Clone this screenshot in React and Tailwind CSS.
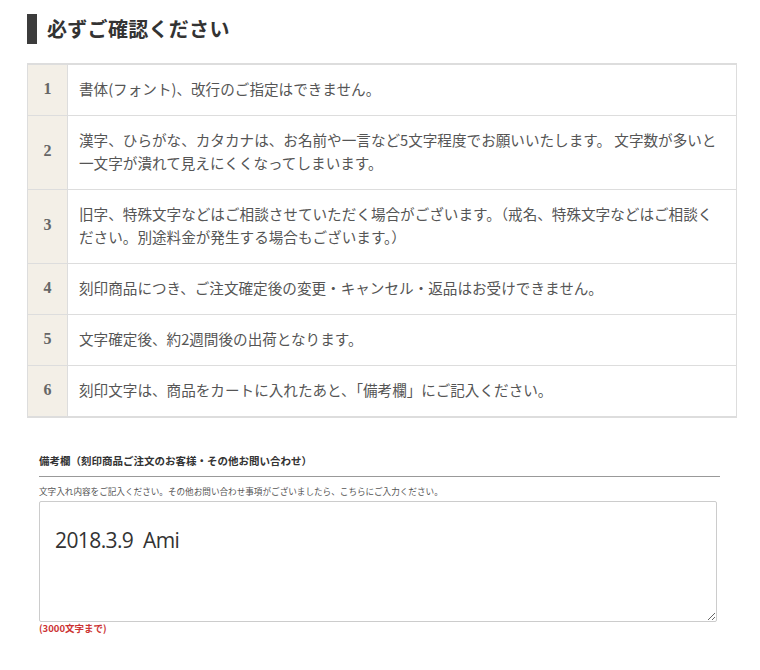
const rows = [
  ["1", <>書体(フォント)、改行のご指定はできません。</>],
  ["2", <>漢字、ひらがな、カタカナは、お名前や一言など5文字程度でお願いいたします。 文字数が多いと<br />一文字が潰れて見えにくくなってしまいます。</>],
  ["3", <>旧字、特殊文字などはご相談させていただく場合がございます。（戒名、特殊文字などはご相談く<br />ださい。別途料金が発生する場合もございます。）</>],
  ["4", <>刻印商品につき、ご注文確定後の変更・キャンセル・返品はお受けできません。</>],
  ["5", <>文字確定後、約2週間後の出荷となります。</>],
  ["6", <>刻印文字は、商品をカートに入れたあと、「備考欄」にご記入ください。</>],
];

export default function App() {
  const jp = { fontFamily: '"Noto Sans CJK JP", "Noto Sans", sans-serif' };
  return (
    <div className="bg-white w-[760px] h-[670px] pl-[27px] pt-[14px]" style={jp}>
      <div className="flex items-center h-[30px]">
        <div className="w-[10px] h-[30px] bg-[#3c3c3c]" />
        <h2 className="ml-[10px] text-[20px] font-bold text-[#333] leading-none tracking-[0.3px]">必ずご確認ください</h2>
      </div>
      <table className="mt-[19px] w-[710px] table-fixed border-collapse border-t-2 border-b-2 border-[#dddddd]">
        <colgroup>
          <col className="w-[40px]" />
          <col />
        </colgroup>
        <tbody>
          {rows.map(([n, t]) => (
            <tr key={n} className="border-b border-[#dddddd] last:border-b-0">
              <td
                className="border-l border-r border-[#dddddd] bg-[#f3efe7] text-center text-[16px] font-bold text-[#666] pb-[3px]"
                style={{ fontFamily: '"Liberation Serif", "DejaVu Serif", serif' }}
              >
                {n}
              </td>
              <td className="border-r border-[#dddddd] pl-[11px] pr-[8px] pt-[11.5px] pb-[15.5px] text-[14.6px] leading-[23px] text-[#555] whitespace-nowrap">
                {t}
              </td>
            </tr>
          ))}
        </tbody>
      </table>
      <div className="ml-[12px] mt-[36px] w-[681px]">
        <div className="text-[10.5px] font-bold text-[#333] pb-[8px] border-b border-[#999] leading-[14px]">
          備考欄（刻印商品ご注文のお客様・その他お問い合わせ）
        </div>
        <div className="text-[8.6px] text-[#555] mt-[8px] leading-[12px]">
          文字入れ内容をご記入ください。その他お問い合わせ事項がございましたら、こちらにご入力ください。
        </div>
        <textarea
          className="block mt-[4px] w-[678px] h-[121px] border border-[#cccccc] rounded-[2px] px-[15px] pt-[24px] text-[21px] tracking-[-0.6px] text-[#333] leading-[28px] outline-none resize-y"
          style={{ fontFamily: '"Open Sans", "Noto Sans", sans-serif' }}
          defaultValue={"2018.3.9  Ami"}
        />
        <div className="text-[9.5px] font-bold text-[#cc3333] mt-[0px] leading-[13px]">(3000文字まで)</div>
      </div>
    </div>
  );
}
